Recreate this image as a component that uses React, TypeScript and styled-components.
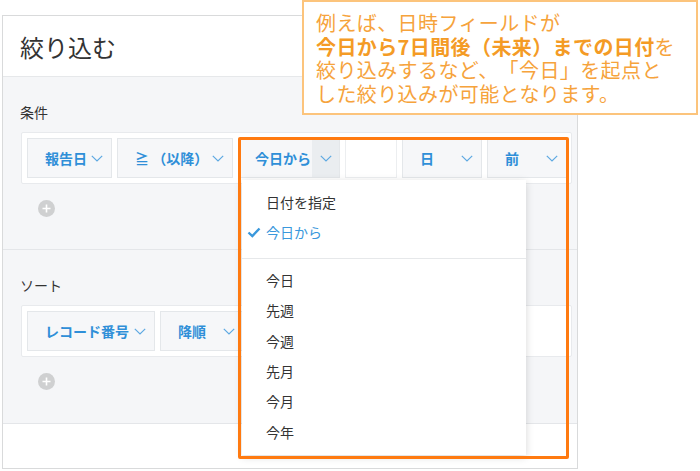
import React from 'react'
import styled, { createGlobalStyle } from 'styled-components'

const GlobalStyle = createGlobalStyle`
  html, body {
    margin: 0;
    padding: 0;
    background: #fff;
  }
  body {
    font-family: 'Noto Sans CJK JP', 'Noto Sans', sans-serif;
    color: #333;
    text-spacing-trim: space-all;
  }
`

const Page = styled.div`
  position: relative;
  width: 700px;
  height: 471px;
  overflow: hidden;
  background: #fff;
`

const Panel = styled.div`
  margin: 15px 0 0 2px;
  width: 576px;
  height: 454px;
  box-sizing: border-box;
  border: 1px solid #d9dadb;
  display: flex;
  flex-direction: column;
  background: #fff;
`

const Header = styled.div`
  height: 61px;
  flex: none;
  display: flex;
  align-items: center;
  padding-left: 17px;
  font-size: 24px;
  color: #333;
  border-bottom: 1px solid #e6e8ea;
  box-sizing: border-box;
`

const Body = styled.div`
  background: #f5f6f8;
  display: flex;
  flex-direction: column;
`

const Section = styled.div<{ padBottom: number }>`
  padding: 25px 0 ${(p) => p.padBottom}px 0;
  border-bottom: 1px solid #e4e6e9;
  display: flex;
  flex-direction: column;
`

const SectionLabel = styled.div`
  font-size: 14px;
  line-height: 20px;
  color: #333;
  padding-left: 17px;
`

const RowBox = styled.div`
  margin: 10px 5px 0 18px;
  padding: 5px;
  background: #fff;
  border: 1px solid #e8eaed;
  border-radius: 2px;
  display: flex;
  gap: 5px;
`

const Chip = styled.div<{ w: number }>`
  width: ${(p) => p.w}px;
  height: 40px;
  box-sizing: border-box;
  flex: none;
  display: flex;
  align-items: center;
  justify-content: space-between;
  padding: 0 8px 0 17px;
  background: #f6f7f9;
  border: 1px solid #e4e7ea;
  font-size: 14px;
  font-weight: 700;
  color: #2f8fd8;
  white-space: nowrap;
`

const SplitChip = styled(Chip)`
  padding: 0;
`

const SplitText = styled.span`
  padding-left: 16px;
`

const SplitArrow = styled.span`
  width: 27px;
  align-self: stretch;
  display: flex;
  align-items: center;
  justify-content: center;
  background: #eaedf0;
`

const NumberInput = styled.div<{ w: number }>`
  width: ${(p) => p.w}px;
  height: 40px;
  box-sizing: border-box;
  background: #fff;
  border: 1px solid #eceef0;
  flex: none;
`

const AddButton = styled.div`
  margin: 16px 0 0 35px;
  width: 17px;
  height: 17px;
  border-radius: 50%;
  background: #cfd0d1;
  display: flex;
  align-items: center;
  justify-content: center;
`

const Footer = styled.div`
  flex: 1;
  background: #fff;
`

const Menu = styled.div`
  position: absolute;
  left: 242px;
  top: 180px;
  width: 284px;
  height: 275px;
  background: #fff;
  box-shadow: 0 2px 8px rgba(0, 0, 0, 0.16);
  display: flex;
  flex-direction: column;
`

const MenuGroup = styled.div<{ top: number; bottom: number; line?: boolean }>`
  padding: ${(p) => p.top}px 0 ${(p) => p.bottom}px 0;
  border-bottom: ${(p) => (p.line ? '1px solid #e6e8ea' : 'none')};
`

const MenuItem = styled.div<{ active?: boolean }>`
  position: relative;
  height: 30.4px;
  line-height: 30.4px;
  padding-left: 24px;
  font-size: 14px;
  color: ${(p) => (p.active ? '#3a98dc' : '#333')};
`

const Check = styled.svg`
  position: absolute;
  left: 5px;
  top: 10px;
`

const Highlight = styled.div`
  position: absolute;
  left: 238px;
  top: 137px;
  width: 331px;
  height: 322px;
  box-sizing: border-box;
  border: 3px solid #ff7a10;
  border-radius: 2px;
  pointer-events: none;
`

const Callout = styled.div`
  position: absolute;
  left: 302px;
  top: 0;
  width: 396px;
  height: 115px;
  box-sizing: border-box;
  background: #fff;
  border: 2px solid #fcc47c;
  padding: 9px 0 0 12px;
  font-size: 20px;
  line-height: 23.7px;
  letter-spacing: 0.4px;
  color: #f6a33c;
  white-space: nowrap;
`

const Strong = styled.b`
  font-weight: 700;
  color: #f49b25;
`

const Chevron = () => (
  <svg width="12" height="7" viewBox="0 0 12 7">
    <polyline points="0.8,0.8 6,6 11.2,0.8" fill="none" stroke="#5ea9e2" strokeWidth="1.2" />
  </svg>
)

const Plus = () => (
  <svg width="9" height="9" viewBox="0 0 9 9">
    <path d="M4.5 0.5v8M0.5 4.5h8" stroke="#fff" strokeWidth="1.6" />
  </svg>
)

const SelectChip = ({ w, label }: { w: number; label: string }) => (
  <Chip w={w}>
    <span>{label}</span>
    <Chevron />
  </Chip>
)

const rangeItems = ['今日', '先週', '今週', '先月', '今月', '今年']

export default function App() {
  return (
    <Page>
      <GlobalStyle />
      <Panel>
        <Header>絞り込む</Header>
        <Body>
          <Section padBottom={32}>
            <SectionLabel>条件</SectionLabel>
            <RowBox>
              <SelectChip w={85} label="報告日" />
              <SelectChip w={116} label="≧ （以降）" />
              <SplitChip w={102}>
                <SplitText>今日から</SplitText>
                <SplitArrow>
                  <Chevron />
                </SplitArrow>
              </SplitChip>
              <NumberInput w={52} />
              <SelectChip w={80} label="日" />
              <SelectChip w={80} label="前" />
            </RowBox>
            <AddButton>
              <Plus />
            </AddButton>
          </Section>
          <Section padBottom={33}>
            <SectionLabel>ソート</SectionLabel>
            <RowBox>
              <SelectChip w={128} label="レコード番号" />
              <SelectChip w={84} label="降順" />
            </RowBox>
            <AddButton>
              <Plus />
            </AddButton>
          </Section>
        </Body>
        <Footer />
      </Panel>

      <Menu>
        <MenuGroup top={7} bottom={10} line>
          <MenuItem>日付を指定</MenuItem>
          <MenuItem active>
            <Check width="14" height="11" viewBox="0 0 14 11">
              <path d="M1.5 5.5l3.8 3.6L12.5 1.5" fill="none" stroke="#3a98dc" strokeWidth="2.4" />
            </Check>
            今日から
          </MenuItem>
        </MenuGroup>
        <MenuGroup top={6} bottom={0}>
          {rangeItems.map((t) => (
            <MenuItem key={t}>{t}</MenuItem>
          ))}
        </MenuGroup>
      </Menu>

      <Highlight />

      <Callout>
        例えば、日時フィールドが
        <br />
        <Strong>今日から7日間後（未来）までの日付</Strong>を
        <br />
        絞り込みするなど、「今日」を起点と
        <br />
        した絞り込みが可能となります。
      </Callout>
    </Page>
  )
}
